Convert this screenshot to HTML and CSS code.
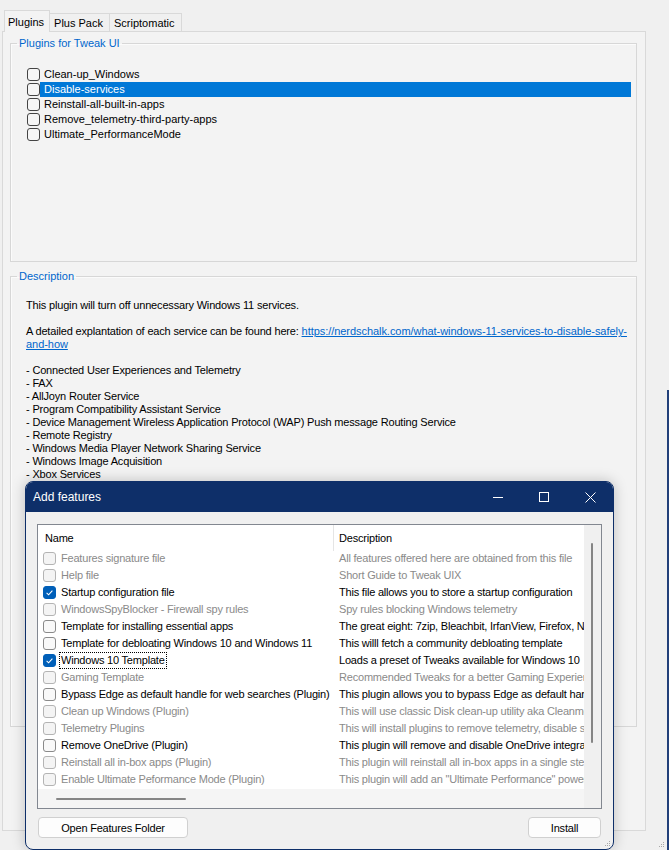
FILE: index.html
```html
<!DOCTYPE html>
<html>
<head>
<meta charset="utf-8">
<title>Tweak UI</title>
<link rel="stylesheet" href="styles.css">
</head>
<body>
<div class="app">
  <div class="tabs">
    <div class="tab active">Plugins</div>
    <div class="tab">Plus Pack</div>
    <div class="tab">Scriptomatic</div>
  </div>
  <div class="panel">
    <fieldset class="group g1">
      <legend>Plugins for Tweak UI</legend>
      <ul class="plist">
        <li><span class="cb"></span><span class="lbl">Clean-up_Windows</span></li>
        <li class="sel"><span class="cb"></span><span class="lbl">Disable-services</span></li>
        <li><span class="cb"></span><span class="lbl">Reinstall-all-built-in-apps</span></li>
        <li><span class="cb"></span><span class="lbl">Remove_telemetry-third-party-apps</span></li>
        <li><span class="cb"></span><span class="lbl">Ultimate_PerformanceMode</span></li>
      </ul>
    </fieldset>
    <fieldset class="group g2">
      <legend>Description</legend>
      <div class="desc">
        <p>This plugin will turn off unnecessary Windows 11 services.</p>
        <p>A detailed explantation of each service can be found here: <a class="link" href="#">https://nerdschalk.com/what-windows-11-services-to-disable-safely-<br>and-how</a></p>
        <p>- Connected User Experiences and Telemetry<br>- FAX<br>- AllJoyn Router Service<br>- Program Compatibility Assistant Service<br>- Device Management Wireless Application Protocol (WAP) Push message Routing Service<br>- Remote Registry<br>- Windows Media Player Network Sharing Service<br>- Windows Image Acquisition<br>- Xbox Services</p>
      </div>
    </fieldset>
  </div>
</div>
<div class="edge"></div>
<svg class="grip grip-main" width="6" height="6" viewBox="0 0 6 6"><rect x="4" y="0" width="1" height="1"/><rect x="2" y="2" width="1" height="1"/><rect x="4" y="2" width="1" height="1"/><rect x="0" y="4" width="1" height="1"/><rect x="2" y="4" width="1" height="1"/><rect x="4" y="4" width="1" height="1"/></svg>

<div class="dialog">
  <div class="titlebar">
    <span class="title">Add features</span>
    <div class="controls">
      <span class="ctl"><svg width="10" height="10" viewBox="0 0 10 10"><path d="M0 5.5H10" stroke="#fff" stroke-width="1"/></svg></span>
      <span class="ctl"><svg width="10" height="10" viewBox="0 0 10 10"><rect x="0.5" y="0.5" width="9" height="9" fill="none" stroke="#fff" stroke-width="1"/></svg></span>
      <span class="ctl"><svg width="11" height="11" viewBox="0 0 11 11"><path d="M0.5 0.5L10.5 10.5M10.5 0.5L0.5 10.5" stroke="#fff" stroke-width="1"/></svg></span>
    </div>
  </div>
  <div class="dbody">
    <div class="listbox">
      <div class="lv">
        <div class="lv-head">
          <div class="col-name">Name</div>
          <div class="col-desc">Description</div>
        </div>
        <div class="lv-rows">
          <div class="row dis"><span class="nm"><span class="cb2"></span><span class="tx">Features signature file</span></span><span class="ds">All features offered here are obtained from this file</span></div>
          <div class="row dis"><span class="nm"><span class="cb2"></span><span class="tx">Help file</span></span><span class="ds">Short Guide to Tweak UIX</span></div>
          <div class="row"><span class="nm"><span class="cb2 on"><svg width="13" height="13" viewBox="0 0 13 13"><path d="M3.6 6.9L5.6 8.8L9.4 4.6" fill="none" stroke="#fff" stroke-width="1.1"/></svg></span><span class="tx">Startup configuration file</span></span><span class="ds">This file allows you to store a startup configuration</span></div>
          <div class="row dis"><span class="nm"><span class="cb2"></span><span class="tx">WindowsSpyBlocker - Firewall spy rules</span></span><span class="ds">Spy rules blocking Windows telemetry</span></div>
          <div class="row"><span class="nm"><span class="cb2"></span><span class="tx">Template for installing essential apps</span></span><span class="ds">The great eight: 7zip, Bleachbit, IrfanView, Firefox, Notepad++, VLC</span></div>
          <div class="row"><span class="nm"><span class="cb2"></span><span class="tx">Template for debloating Windows 10 and Windows 11</span></span><span class="ds">This willl fetch a community debloating template</span></div>
          <div class="row"><span class="nm"><span class="cb2 on"><svg width="13" height="13" viewBox="0 0 13 13"><path d="M3.6 6.9L5.6 8.8L9.4 4.6" fill="none" stroke="#fff" stroke-width="1.1"/></svg></span><span class="tx focus">Windows 10 Template</span></span><span class="ds">Loads a preset of Tweaks available for Windows 10</span></div>
          <div class="row dis"><span class="nm"><span class="cb2"></span><span class="tx">Gaming Template</span></span><span class="ds">Recommended Tweaks for a better Gaming Experience</span></div>
          <div class="row"><span class="nm"><span class="cb2"></span><span class="tx">Bypass Edge as default handle for web searches (Plugin)</span></span><span class="ds">This plugin allows you to bypass Edge as default handler</span></div>
          <div class="row dis"><span class="nm"><span class="cb2"></span><span class="tx">Clean up Windows (Plugin)</span></span><span class="ds">This will use classic Disk clean-up utility aka Cleanmgr</span></div>
          <div class="row dis"><span class="nm"><span class="cb2"></span><span class="tx">Telemetry Plugins</span></span><span class="ds">This will install plugins to remove telemetry, disable services</span></div>
          <div class="row"><span class="nm"><span class="cb2"></span><span class="tx">Remove OneDrive (Plugin)</span></span><span class="ds">This plugin will remove and disable OneDrive integration</span></div>
          <div class="row dis"><span class="nm"><span class="cb2"></span><span class="tx">Reinstall all in-box apps (Plugin)</span></span><span class="ds">This plugin will reinstall all in-box apps in a single step</span></div>
          <div class="row dis"><span class="nm"><span class="cb2"></span><span class="tx">Enable Ultimate Peformance Mode (Plugin)</span></span><span class="ds">This plugin will add an "Ultimate Performance" power plan</span></div>
        </div>
        <div class="hscroll"><span class="hthumb"></span></div>
      </div>
      <div class="vscroll"><span class="vthumb"></span></div>
    </div>
    <div class="buttons">
      <button class="btn btn-open">Open Features Folder</button>
      <button class="btn btn-install">Install</button>
    </div>
  </div>
  <svg class="grip grip-dlg" width="6" height="6" viewBox="0 0 6 6"><rect x="4" y="0" width="1" height="1"/><rect x="2" y="2" width="1" height="1"/><rect x="4" y="2" width="1" height="1"/><rect x="0" y="4" width="1" height="1"/><rect x="2" y="4" width="1" height="1"/><rect x="4" y="4" width="1" height="1"/></svg>
</div>
</body>
</html>
```

FILE: styles.css
```css
* { box-sizing: border-box; }
html, body { margin: 0; padding: 0; }
body {
  width: 669px;
  height: 850px;
  overflow: hidden;
  position: relative;
  background: #f0f0f0;
  font-family: "Liberation Sans", Arial, sans-serif;
  font-size: 11px;
  color: #000;
}

/* ---------- main window ---------- */
.app { padding: 10px 23px 0 2px; }

.tabs {
  display: flex;
  height: 21px;
  padding-left: 2px;
  position: relative;
  z-index: 1;
}
.tab {
  height: 18px;
  margin-top: 3px;
  padding: 0 6px 0 4px;
  line-height: 18px;
  border: 1px solid #d9d9d9;
  border-bottom: none;
  border-left: none;
  background: #f0f0f0;
  white-space: nowrap;
}
.tab.active {
  height: 22px;
  margin-top: 0;
  padding: 0 5px 0 3px;
  line-height: 23px;
  border-left: 1px solid #d9d9d9;
  background: #f3f3f3;
}

.panel {
  height: 800px;
  border: 1px solid #d9d9d9;
  background: #f3f3f3;
  padding: 5px 8px 0 7px;
}

.group {
  margin: 0;
  padding: 0;
  min-width: 0;
  border: 1px solid #d7d7d7;
  box-shadow: inset 1px 1px 0 #fbfbfb;
}
.group legend {
  margin-left: 6px;
  padding: 0 2px;
  line-height: 13px;
  color: #0066cc;
}
.g1 { height: 225px; }
.g2 { height: 457px; margin-top: 8px; }

.plist {
  list-style: none;
  margin: 17px 5px 0 16px;
  padding: 0;
}
.plist li {
  display: flex;
  align-items: center;
  height: 15px;
}
.cb {
  width: 13px;
  height: 13px;
  flex: none;
  border: 1px solid #444;
  border-radius: 3px;
  background: #f6f6f6;
}
.lbl {
  padding: 0 4px;
  line-height: 15px;
  white-space: nowrap;
}
.sel .lbl {
  flex: 1;
  background: #0078d7;
  color: #fff;
}

.desc {
  padding: 16px 6px 0 15px;
  line-height: 13px;
  white-space: nowrap;
  letter-spacing: -0.17px;
}
.desc p { margin: 0 0 13px; }
.link { color: #0066cc; text-decoration: underline; letter-spacing: -0.05px; }

.edge {
  position: absolute;
  right: 0;
  top: 390px;
  bottom: 0;
  width: 2px;
  background: #22407a;
}
.grip { position: absolute; fill: #a8a8a8; }
.grip-main { right: 4px; bottom: 2px; }

/* ---------- dialog ---------- */
.dialog {
  position: absolute;
  left: 25px;
  top: 481px;
  width: 589px;
  height: 369px;
  border: 1px solid #0e2f69;
  border-radius: 8px;
  background: #f0f0f0;
  overflow: hidden;
  box-shadow: 0 0 14px rgba(0, 0, 0, 0.22);
}
.titlebar {
  height: 30px;
  display: flex;
  align-items: center;
  justify-content: space-between;
  background: #0e2f69;
  color: #fff;
}
.title {
  padding-left: 7px;
  font-size: 12px;
}
.controls { display: flex; height: 100%; }
.ctl {
  width: 46px;
  height: 100%;
  display: flex;
  align-items: center;
  justify-content: center;
}
.ctl svg { display: block; }

.dbody {
  padding: 12px 11px 0 11px;
  letter-spacing: -0.2px;
}
.listbox {
  display: flex;
  height: 285px;
  border: 1px solid #828790;
  background: #fff;
}
.lv {
  flex: 1;
  min-width: 0;
  overflow: hidden;
  display: flex;
  flex-direction: column;
}
.lv-head {
  display: grid;
  grid-template-columns: 296px 1fr;
  height: 25px;
  line-height: 26px;
  flex: none;
}
.col-name { padding-left: 7px; border-right: 1px solid #e5e5e5; }
.col-desc { padding-left: 5px; white-space: nowrap; }

.row {
  display: grid;
  grid-template-columns: 296px 1fr;
  height: 17px;
  color: #000;
}
.row.dis { color: #8a8a8a; }
.nm {
  display: flex;
  align-items: center;
  padding-left: 5px;
  white-space: nowrap;
  overflow: hidden;
}
.cb2 {
  width: 13px;
  height: 13px;
  flex: none;
  border: 1px solid #8a8a8a;
  border-radius: 3px;
  background: #f9f9f9;
}
.dis .cb2 { border-color: #b4b4b4; background: #f4f4f4; }
.cb2.on {
  border-color: #005fb8;
  background: #005fb8;
}
.cb2.on svg { display: block; margin: -1px; }
.tx {
  margin-left: 3px;
  padding: 0 1px;
  line-height: 15px;
  border: 1px solid transparent;
}
.tx.focus { border: 1px dotted #000; }
.ds {
  padding-left: 5px;
  line-height: 17px;
  white-space: nowrap;
  overflow: hidden;
}

.hscroll {
  height: 19px;
  flex: none;
  margin-top: auto;
  background: #f5f5f5;
  padding: 9px 0 0 18px;
}
.hthumb {
  display: block;
  width: 130px;
  height: 2px;
  border-radius: 1px;
  background: #858585;
}
.vscroll {
  width: 17px;
  flex: none;
  background: #f0f0f0;
  padding: 18px 0 0 7px;
}
.vthumb {
  display: block;
  width: 2px;
  height: 200px;
  border-radius: 1px;
  background: #858585;
}

.buttons {
  display: flex;
  justify-content: space-between;
  margin-top: 8px;
  padding: 0 1px;
}
.btn {
  height: 21px;
  padding: 0;
  border: 1px solid #d0d0d0;
  border-radius: 4px;
  background: #fdfdfd;
  font-family: "Liberation Sans", Arial, sans-serif;
  font-size: 11px;
  letter-spacing: -0.2px;
  color: #000;
}
.btn-open { width: 150px; }
.btn-install { width: 73px; }

.grip-dlg { right: 2px; bottom: 2px; }
```
